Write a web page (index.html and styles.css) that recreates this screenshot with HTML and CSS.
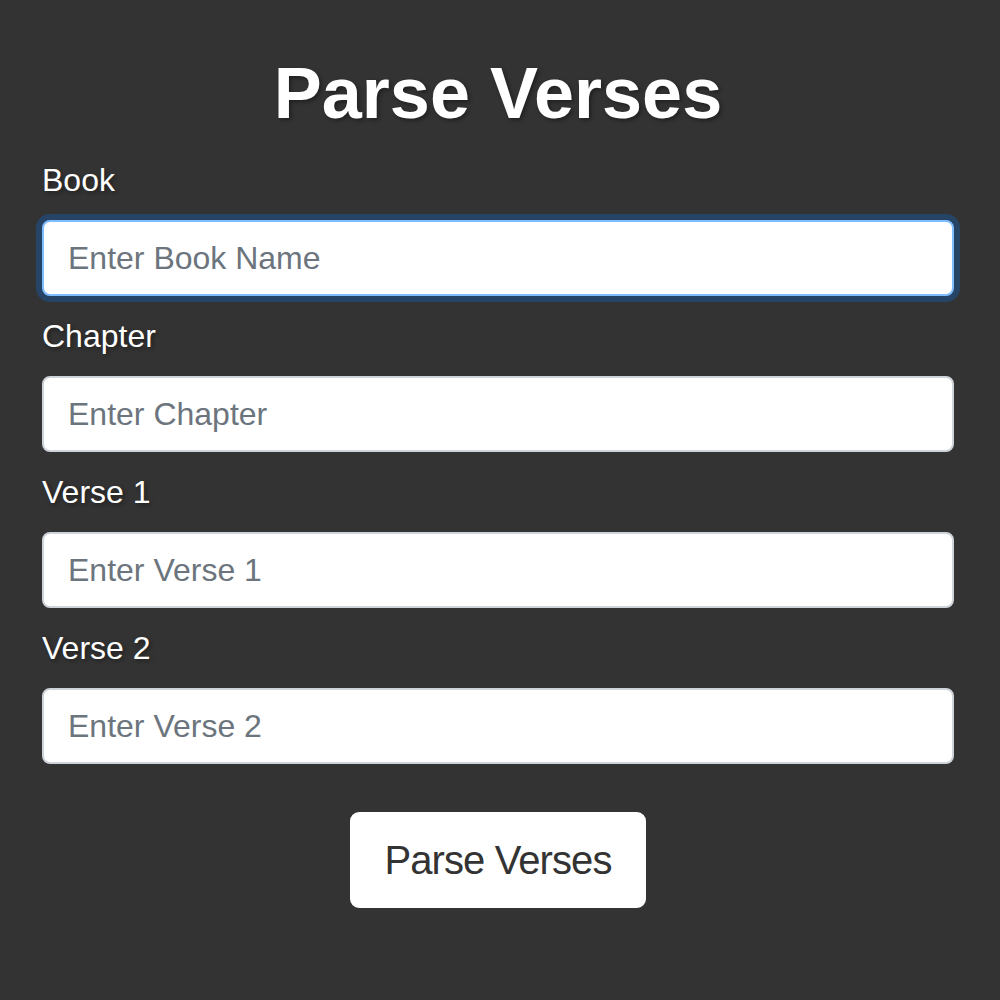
FILE: index.html
```html
<!DOCTYPE html>
<html lang="en">
<head>
<meta charset="utf-8">
<title>Parse Verses</title>
<link rel="stylesheet" href="styles.css">
</head>
<body>
<main class="page">
  <h1 class="title">Parse Verses</h1>
  <form class="form">
    <div class="group">
      <label class="label" for="book">Book</label>
      <input class="field field-focus" id="book" type="text" placeholder="Enter Book Name">
    </div>
    <div class="group">
      <label class="label" for="chapter">Chapter</label>
      <input class="field" id="chapter" type="text" placeholder="Enter Chapter">
    </div>
    <div class="group">
      <label class="label" for="verse1">Verse 1</label>
      <input class="field" id="verse1" type="text" placeholder="Enter Verse 1">
    </div>
    <div class="group">
      <label class="label" for="verse2">Verse 2</label>
      <input class="field" id="verse2" type="text" placeholder="Enter Verse 2">
    </div>
    <div class="actions">
      <button class="btn" type="button">Parse Verses</button>
    </div>
  </form>
</main>
</body>
</html>
```

FILE: styles.css
```css
html, body {
  margin: 0;
  padding: 0;
  background: #333333;
}

body {
  font-family: "Liberation Sans", Arial, sans-serif;
  color: #ffffff;
}

.page {
  box-sizing: border-box;
  width: 1000px;
  padding: 50px 46px 0 42px;
}

.title {
  margin: 0 0 20px 0;
  font-size: 72px;
  line-height: 1.2;
  font-weight: 700;
  text-align: center;
  text-shadow: 2px 2px 4px rgba(0, 0, 0, 0.4);
}

.form {
  display: flex;
  flex-direction: column;
}

.group {
  display: flex;
  flex-direction: column;
  margin-bottom: 16px;
}

.label {
  font-size: 32px;
  line-height: 48px;
  margin-bottom: 16px;
  text-shadow: 2px 2px 4px rgba(0, 0, 0, 0.4);
}

.field {
  box-sizing: border-box;
  height: 76px;
  width: 100%;
  padding: 12px 24px;
  font-family: "Liberation Sans", Arial, sans-serif;
  font-size: 32px;
  line-height: 48px;
  color: #495057;
  background: #ffffff;
  border: 2px solid #ced4da;
  border-radius: 8px;
  outline: none;
}

.field::placeholder {
  color: #6c757d;
  opacity: 1;
}

.field-focus {
  border-color: #80bdff;
  box-shadow: 0 0 0 6px rgba(0, 123, 255, 0.25);
}

.actions {
  display: flex;
  justify-content: center;
  margin-top: 32px;
}

.btn {
  box-sizing: border-box;
  height: 96px;
  padding: 16px 32px;
  font-family: "Liberation Sans", Arial, sans-serif;
  font-size: 40px;
  letter-spacing: -0.9px;
  line-height: 60px;
  color: #333333;
  background: #ffffff;
  border: 2px solid #ffffff;
  border-radius: 9px;
}
```
